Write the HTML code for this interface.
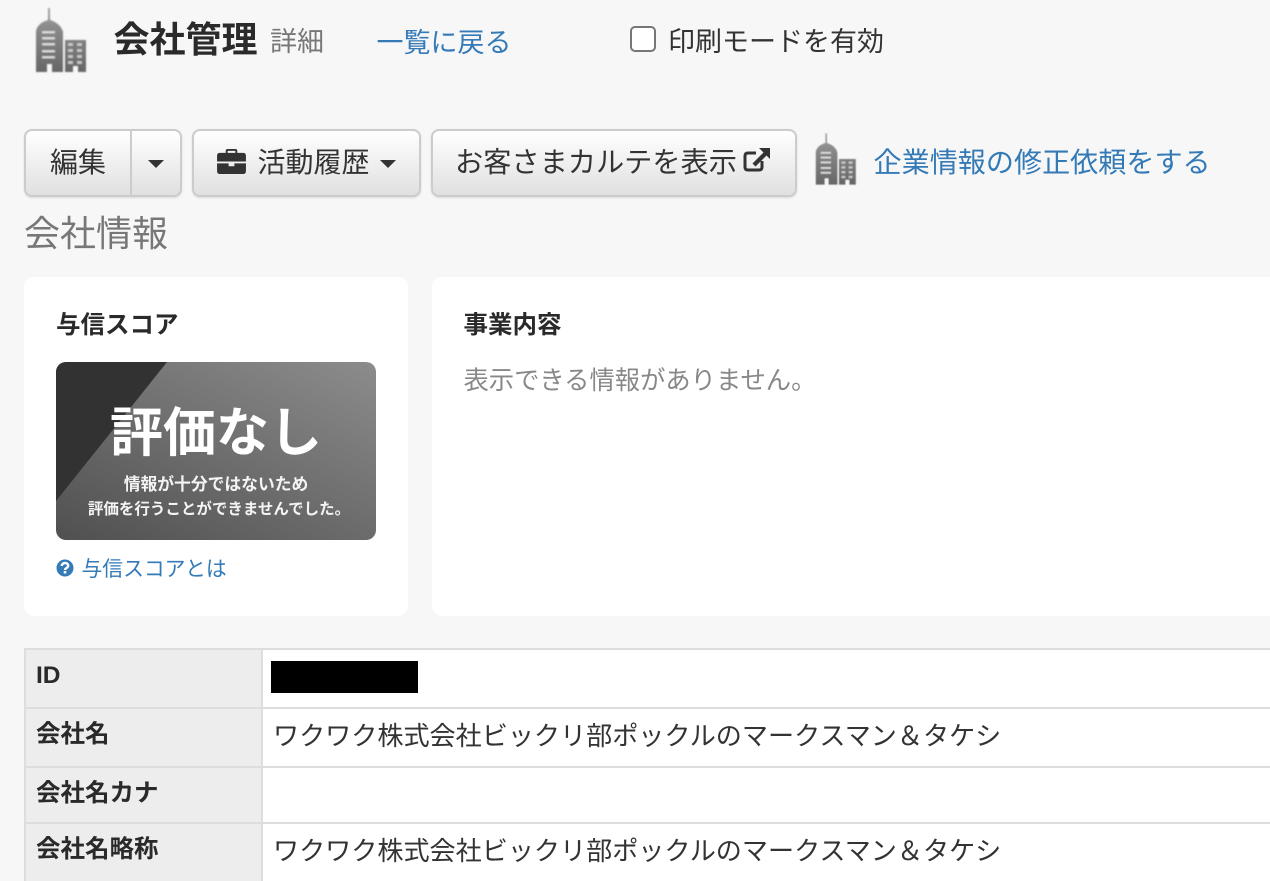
<!DOCTYPE html>
<html lang="ja"><head><meta charset="utf-8"><title>会社管理</title>
<style>
html,body{margin:0;padding:0}
body{width:1270px;height:881px;overflow:hidden;background:#f7f7f7;position:relative;color:#333;font-family:"Liberation Sans","Noto Sans CJK JP",sans-serif}
.a{position:absolute;white-space:nowrap;line-height:1.2}
a{color:#337ab7;text-decoration:none}
.btn{position:absolute;box-sizing:border-box;top:129px;height:68px;border:2px solid #ccc;border-radius:8px;background:linear-gradient(#fff,#e0e0e0);box-shadow:0 1px 2px rgba(0,0,0,.12)}
.caret{position:absolute;width:0;height:0;border-left:8px solid transparent;border-right:8px solid transparent;border-top:8px solid #333}
.card{position:absolute;background:#fff;border-radius:10px;top:277px;height:339px}
.cell{position:absolute;box-sizing:border-box}
.lb{font-size:24.500px;font-weight:700;color:#2a2a2a}
</style></head><body>
<svg class="a" style="left:25px;top:0;filter:blur(.7px)" width="70" height="80" viewBox="0 0 70 80">
<defs><linearGradient id="g" x1="0" y1="0" x2="0" y2="1"><stop offset="0" stop-color="#a5a5a5"/><stop offset=".3" stop-color="#8a8a8a"/><stop offset="1" stop-color="#666"/></linearGradient></defs>
<path fill="url(#g)" d="M23 8h2v12c7 2 12 7 13 12v40H27v-8h-5v8H11V31c1-5 5-9 12-11zM40 40h21v32h-8v-6h-5v6h-8z"/>
<g fill="#dcdcdc"><rect x="17" y="31" width="13" height="2.500"/><rect x="17" y="37" width="13" height="2.500"/><rect x="17" y="43" width="13" height="2.500"/><rect x="17" y="50" width="13" height="2.500"/><rect x="17" y="56" width="13" height="2.500"/></g>
<g fill="#c8c8c8"><rect x="43" y="43" width="5" height="3"/><rect x="52" y="43" width="5" height="3"/><rect x="43" y="49" width="5" height="3"/><rect x="52" y="49" width="5" height="3"/><rect x="43" y="55" width="5" height="3"/><rect x="52" y="55" width="5" height="3"/><rect x="43" y="61" width="5" height="3"/><rect x="52" y="61" width="5" height="3"/></g>
</svg>
<div class="a" style="left:113.500px;top:18px;font-size:36px;font-weight:700;color:#2a2a2a">会社管理</div>
<div class="a" style="left:270px;top:26px;font-size:27px;color:#777">詳細</div>
<a class="a" style="left:376.500px;top:27px;font-size:27px">一覧に戻る</a>
<div class="a" style="left:630px;top:26px;width:26px;height:26px;box-sizing:border-box;border:2px solid #767676;border-radius:5px;background:#fff"></div>
<div class="a" style="left:668px;top:26px;font-size:27px">印刷モードを有効</div>

<div class="btn" style="left:24px;width:158px"></div>
<div class="a" style="left:130px;top:129px;width:2px;height:68px;background:#ccc"></div>
<div class="a" style="left:50px;top:146px;font-size:28px">編集</div>
<div class="caret" style="left:148px;top:160px"></div>

<div class="btn" style="left:192px;width:229px"></div>
<svg class="a" style="left:217px;top:148px" width="29" height="26" viewBox="0 0 30 27"><path fill="#333" fill-rule="evenodd" d="M9 5V3q0-2 2-2h8q2 0 2 2v2h6q3 0 3 3v6H0V8q0-3 3-3zM11 3v2h8V3zM0 16h12v3h6v-3h12v8q0 3-3 3H3q-3 0-3-3z"/></svg>
<div class="a" style="left:257.500px;top:146px;font-size:28px">活動履歴</div>
<div class="caret" style="left:380px;top:160px"></div>

<div class="btn" style="left:431px;width:366px"></div>
<div class="a" style="left:455px;top:146px;font-size:28.200px">お客さまカルテを表示</div>
<svg class="a" style="left:742px;top:147px" width="29" height="27" viewBox="0 0 29 27"><path fill="none" stroke="#333" stroke-width="3" d="M14 6H6Q3 6 3 9v11q0 3 3 3h11q3 0 3-3v-6"/><path fill="#333" d="M17 1h11v11l-3.500-3.500-11 11-3-3 11-11z"/></svg>

<svg class="a" style="left:807px;top:127px;filter:blur(.5px)" width="56" height="64" viewBox="0 0 70 80">
<path fill="url(#g)" d="M23 8h2v12c7 2 12 7 13 12v40H27v-8h-5v8H11V31c1-5 5-9 12-11zM40 40h21v32h-8v-6h-5v6h-8z"/>
<g fill="#dcdcdc"><rect x="17" y="31" width="13" height="2.500"/><rect x="17" y="37" width="13" height="2.500"/><rect x="17" y="43" width="13" height="2.500"/><rect x="17" y="50" width="13" height="2.500"/><rect x="17" y="56" width="13" height="2.500"/></g>
<g fill="#c8c8c8"><rect x="43" y="43" width="5" height="3"/><rect x="52" y="43" width="5" height="3"/><rect x="43" y="49" width="5" height="3"/><rect x="52" y="49" width="5" height="3"/><rect x="43" y="55" width="5" height="3"/><rect x="52" y="55" width="5" height="3"/><rect x="43" y="61" width="5" height="3"/><rect x="52" y="61" width="5" height="3"/></g>
</svg>
<a class="a" style="left:873.500px;top:146px;font-size:28.100px">企業情報の修正依頼をする</a>

<div class="a" style="left:24px;top:212px;font-size:36px;color:#777">会社情報</div>

<div class="card" style="left:24px;width:384px"></div>
<div class="card" style="left:432px;width:860px"></div>
<div class="a lb" style="left:56px;top:311px">与信スコア</div>
<div class="a" style="left:56px;top:362px;width:320px;height:178px;border-radius:10px;overflow:hidden;background:linear-gradient(205deg,#8c8c8c,#505050)">
<svg width="320" height="178" style="position:absolute;left:0;top:0"><path fill="#323232" d="M0 0H111L0 139z"/></svg>
</div>
<div class="a" style="left:56px;top:402px;width:320px;text-align:center;font-size:53px;line-height:64px;font-weight:700;color:#fff">評価なし</div>
<div class="a" style="left:56px;top:473px;width:320px;text-align:center;font-size:16.800px;line-height:24px;font-weight:700;color:#f4f4f4">情報が十分ではないため</div>
<div class="a" style="left:59px;top:498px;width:320px;text-align:center;font-size:15.500px;line-height:24px;font-weight:700;color:#f4f4f4">評価を行うことができませんでした。</div>
<svg class="a" style="left:56px;top:559px" width="18" height="18" viewBox="0 0 18 18"><circle cx="9" cy="9" r="8.500" fill="#337ab7"/><path fill="none" stroke="#fff" stroke-width="2.400" d="M5.800 7c0-2 1.500-3 3.200-3s3.200 1 3.200 2.700c0 2.300-3.200 2.300-3.200 4.300"/><rect x="7.700" y="12" width="2.600" height="2.500" fill="#fff"/></svg>
<a class="a" style="left:81.500px;top:558px;font-size:20.800px">与信スコアとは</a>

<div class="a lb" style="left:463.500px;top:311px">事業内容</div>
<div class="a" style="left:463.500px;top:366px;font-size:25.300px;color:#888">表示できる情報がありません。</div>

<div class="cell" style="left:24px;top:648px;width:1246px;height:233px;background:#fff"></div>
<div class="cell" style="left:24px;top:648px;width:239px;height:233px;background:#ededed"></div>
<div class="cell" style="left:24px;top:648px;width:2px;height:233px;background:#ddd"></div>
<div class="cell" style="left:261px;top:648px;width:2px;height:233px;background:#ddd"></div>
<div class="cell" style="left:24px;top:648px;width:1246px;height:2px;background:#ddd"></div>
<div class="cell" style="left:24px;top:707px;width:1246px;height:2px;background:#ddd"></div>
<div class="cell" style="left:24px;top:766px;width:1246px;height:2px;background:#ddd"></div>
<div class="cell" style="left:24px;top:822px;width:1246px;height:2px;background:#ddd"></div>
<div class="a lb" style="left:36px;top:661px">ID</div>
<div class="a lb" style="left:36px;top:720px">会社名</div>
<div class="a lb" style="left:36px;top:779px">会社名カナ</div>
<div class="a lb" style="left:36px;top:835px">会社名略称</div>
<div class="a" style="left:271px;top:661px;width:147px;height:32px;background:#000"></div>
<div class="a" style="left:273px;top:721px;font-size:26.100px">ワクワク株式会社ビックリ部ポックルのマークスマン＆タケシ</div>
<div class="a" style="left:273px;top:836px;font-size:26.100px">ワクワク株式会社ビックリ部ポックルのマークスマン＆タケシ</div>
</body></html>
